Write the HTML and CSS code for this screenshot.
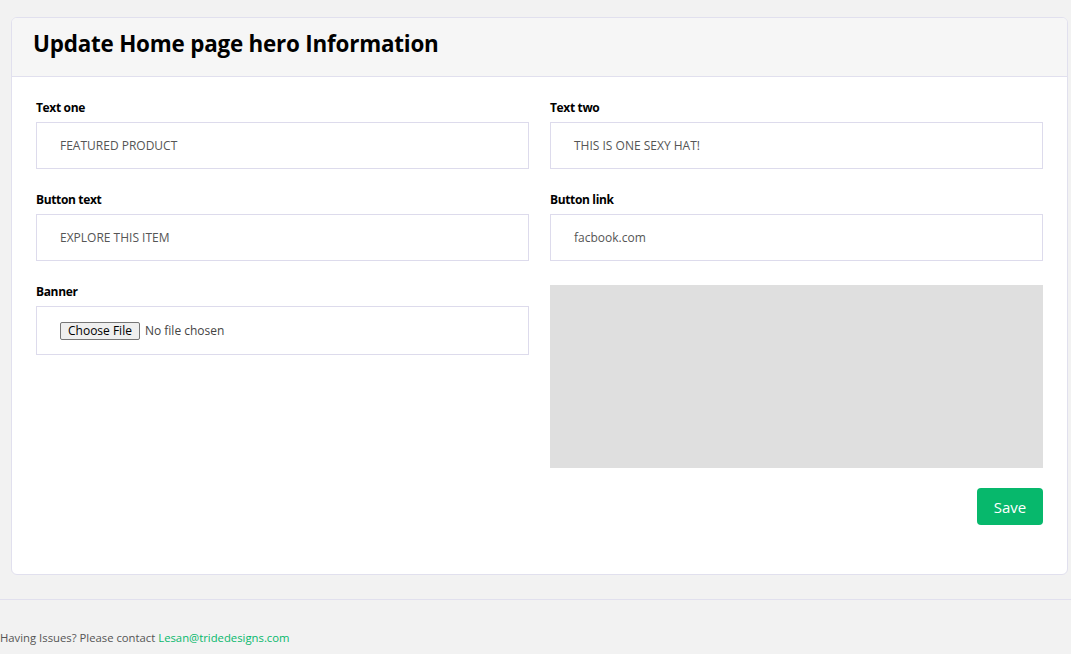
FILE: index.html
```html
<!DOCTYPE html>
<html>
<head>
<meta charset="utf-8">
<link rel="stylesheet" href="styles.css">
</head>
<body>
<main class="page">
  <section class="card">
    <header class="card-header">
      <h1>Update Home page hero Information</h1>
    </header>
    <form class="card-body">
      <div class="grid">
        <div class="field">
          <label>Text one</label>
          <div class="input">FEATURED PRODUCT</div>
        </div>
        <div class="field">
          <label>Text two</label>
          <div class="input">THIS IS ONE SEXY HAT!</div>
        </div>
        <div class="field">
          <label>Button text</label>
          <div class="input">EXPLORE THIS ITEM</div>
        </div>
        <div class="field">
          <label>Button link</label>
          <div class="input">facbook.com</div>
        </div>
        <div class="field">
          <label>Banner</label>
          <div class="input file"><span class="file-btn">Choose File</span><span class="file-name">No file chosen</span></div>
        </div>
        <div class="preview-wrap">
          <div class="preview"></div>
        </div>
      </div>
      <div class="actions">
        <button type="button" class="save">Save</button>
      </div>
    </form>
  </section>
</main>
<footer class="footer">
  <p>Having Issues? Please contact <a href="#">Lesan@tridedesigns.com</a></p>
</footer>
</body>
</html>
```

FILE: styles.css
```css
* { box-sizing: border-box; }
html, body { margin: 0; padding: 0; }
body {
  background: #f2f2f2;
  font-family: "Open Sans", "Noto Sans", sans-serif;
  color: #000;
  height: 654px;
  overflow: hidden;
}
.page {
  padding: 17px 3px 0 11px;
}
.card {
  background: #fff;
  border: 1px solid #e1e0ee;
  border-radius: 6px;
  overflow: hidden;
}
.card-header {
  background: #f6f6f6;
  border-bottom: 1px solid #e1e0ee;
  height: 59px;
  padding: 0 21px 7px;
  display: flex;
  align-items: center;
}
.card-header h1 {
  margin: 0;
  font-size: 22.4px;
  font-weight: 700;
  letter-spacing: -0.2px;
}
.card-body {
  padding: 23px 24px 49px 24px;
}
.grid {
  display: grid;
  grid-template-columns: 1fr 1fr;
  column-gap: 21px;
  row-gap: 23px;
  align-items: start;
}
.field label {
  display: block;
  font-size: 12px;
  font-weight: 700;
  line-height: 16px;
  margin-bottom: 6px;
  letter-spacing: -0.35px;
}
.input {
  height: 47px;
  border: 1px solid #dddbec;
  padding: 0 23px;
  display: flex;
  align-items: center;
  font-size: 12px;
  color: #555;
}
.input.file {
  height: 49px;
  color: #444;
}
.file-btn {
  display: inline-block;
  border: 1px solid #767676;
  border-radius: 2px;
  background: #efefef;
  color: #000;
  font-size: 12px;
  padding: 1px 7px;
  line-height: 14px;
  margin-right: 5px;
}
.file-name { font-size: 12px; }
.preview-wrap {
  padding-top: 1px;
}
.preview {
  height: 183px;
  background: #dfdfdf;
}
.actions {
  display: flex;
  justify-content: flex-end;
  margin-top: 20px;
}
.save {
  background: #07b86c;
  color: #fff;
  border: none;
  border-radius: 4px;
  width: 66px;
  height: 37px;
  font-family: inherit;
  font-size: 15px;
  cursor: pointer;
}
.footer {
  margin-top: 24px;
  border-top: 1px solid #e1e0ee;
  padding-top: 30px;
}
.footer p {
  margin: 0;
  font-size: 11.3px;
  color: #555;
}
.footer a {
  color: #07b86c;
  text-decoration: none;
}
```
